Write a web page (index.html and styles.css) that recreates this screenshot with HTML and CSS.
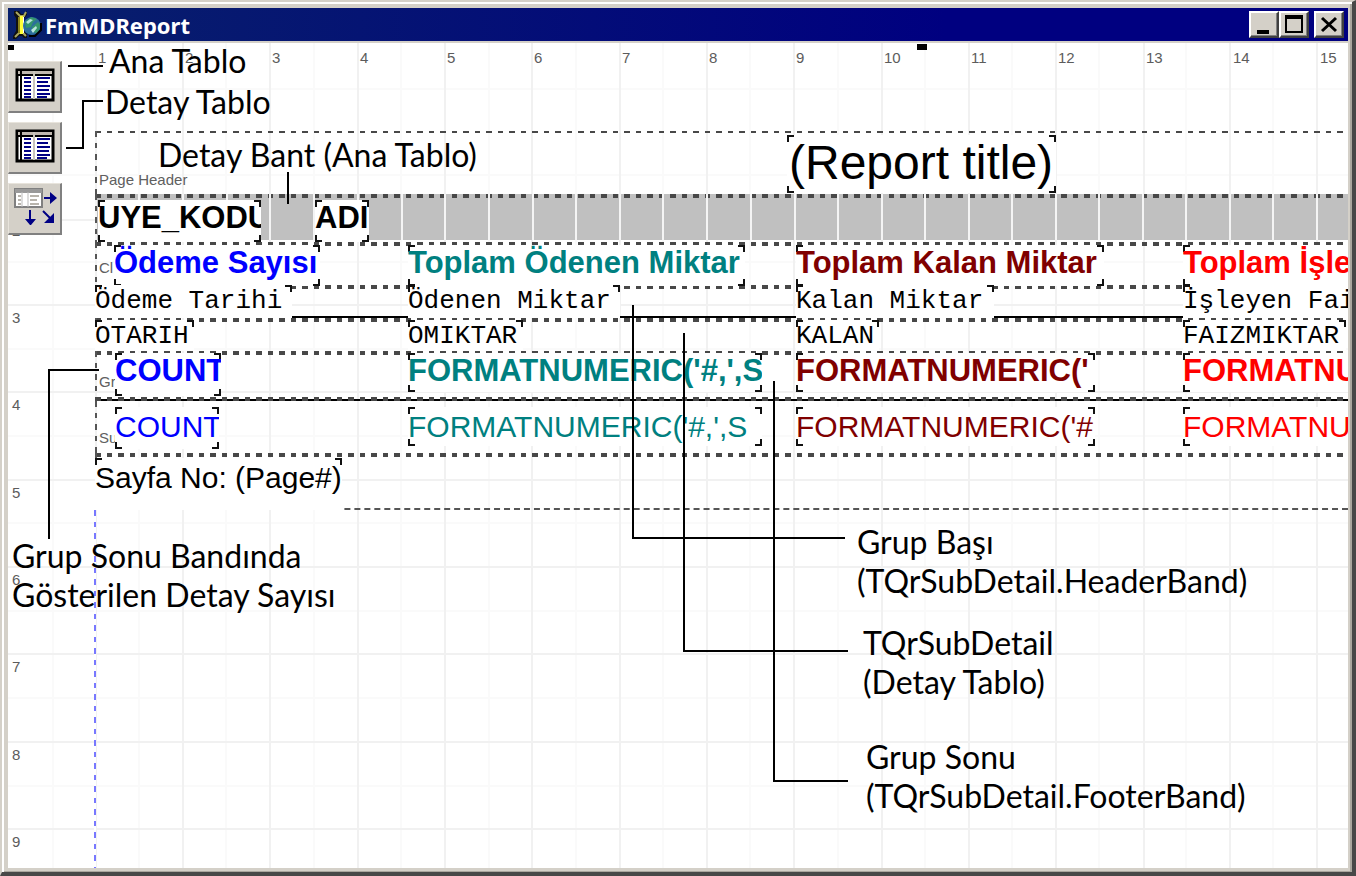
FILE: index.html
```html
<!DOCTYPE html>
<html lang="tr">
<head>
<meta charset="utf-8">
<title>FmMDReport</title>
<link rel="stylesheet" href="styles.css">
</head>
<body>
<main class="window">
  <header class="titlebar">
    <svg class="app-icon" viewBox="0 0 30 32" aria-hidden="true">
      <path d="M2 2h5l2 3h3l3-3v4l-3 3v13l3 3v4h-3l-2-2H7l-3 3H1v-3l3-5V9L2 6z" fill="#111"/>
      <path d="M4 3l4 4h4l2-4M3 28l4-4h4l3 3" fill="none" stroke="#aaa860" stroke-width="2"/>
      <path d="M6 8h2v16H6z" fill="#8c8418"/><path d="M8 7h3v18H8z" fill="#ffff38"/><path d="M11 8h1v16h-1z" fill="#fff"/>
      <circle cx="20" cy="17" r="9" fill="#2c6f9c"/>
      <path d="M13 13l6-5 6 2-4 3-2 5-5 1zM20 18l6-5 3 4-4 7-4-1z" fill="#35966c"/>
      <path d="M14 13l4-3 3 1-5 4zM19 21l5-4 1 2-4 5z" fill="#b9e6dc"/>
      <path d="M29 14v7l-6 6h-6" fill="none" stroke="#000" stroke-width="2"/>
    </svg>
    <h1 class="title">FmMDReport</h1>
    <div class="controls">
      <button class="ctl" type="button" aria-label="Minimize"><svg viewBox="0 0 26 23"><path d="M6 19h12" stroke="#000" stroke-width="4"/></svg></button>
      <button class="ctl" type="button" aria-label="Maximize"><svg viewBox="0 0 26 23"><path d="M5 3h16v16H5zM5 5h16" fill="none" stroke="#000" stroke-width="2"/></svg></button>
      <button class="ctl close" type="button" aria-label="Close"><svg viewBox="0 0 26 23"><path d="M6 5l14 13M20 5L6 18" stroke="#000" stroke-width="3"/></svg></button>
    </div>
  </header>

  <section class="canvas">
    <svg class="grid" aria-hidden="true">
      <path class="half" d="M45 0v2000M131 0v2000M218 0v2000M306 0v2000M393 0v2000M481 0v2000M568 0v2000M655 0v2000M742 0v2000M830 0v2000M917 0v2000M1004 0v2000M1091 0v2000M1178 0v2000M1265 0v2000M0 46h3000M0 132h3000M0 219h3000M0 306h3000M0 393h3000M0 480h3000M0 568h3000M0 655h3000M0 743h3000"/>
      <path class="full" d="M88 0v2000M175 0v2000M262 0v2000M350 0v2000M437 0v2000M524 0v2000M612 0v2000M699 0v2000M786 0v2000M874 0v2000M961 0v2000M1048 0v2000M1136 0v2000M1222 0v2000M1309 0v2000M0 177h3000M0 262h3000M0 349h3000M0 437h3000M0 524h3000M0 611h3000M0 699h3000M0 786h3000"/>
    </svg>
    <div class="ruler-x"><span>1</span><span>2</span><span>3</span><span>4</span><span>5</span><span>6</span><span>7</span><span>8</span><span>9</span><span>10</span><span>11</span><span>12</span><span>13</span><span>14</span><span>15</span></div>
    <div class="ruler-y"><span>2</span><span>3</span><span>4</span><span>5</span><span>6</span><span>7</span><span>8</span><span>9</span></div>
    <i class="handle corner"></i><i class="handle top"></i>
    <i class="margin-line"></i>

    <div class="toolbox">
      <button class="tool" type="button" aria-label="Ana Tablo"><svg viewBox="0 0 51 49"><use href="#table-icon"/></svg></button>
      <button class="tool" type="button" aria-label="Detay Tablo"><svg viewBox="0 0 51 49"><use href="#table-icon"/></svg></button>
      <button class="tool" type="button" aria-label="Master link">
        <svg viewBox="0 0 51 49">
          <path d="M6 5h27v18H6z" fill="#fff" stroke="#808080" stroke-width="2"/><path d="M6 7h27" stroke="#999" stroke-width="4"/><path d="M13 8v15M19 8v15" stroke="#bbb"/>
          <path d="M9 12h3M9 16h3M9 20h3M21 12h9M21 16h7M21 20h9" stroke="#b8b4ac" stroke-width="2"/>
          <path d="M35 14h8M21 26v11M34 27l9 9" stroke="#000084" stroke-width="2" fill="none"/>
          <path d="M41 8l7 6-7 6zM16 35h11l-5 6h-1zM45 29v10H35z" fill="#000084"/>
        </svg>
      </button>
    </div>
    <svg width="0" height="0" class="defs" aria-hidden="true">
      <symbol id="table-icon" viewBox="0 0 51 49">
        <path d="M8 8h36v30H8z" fill="#fff" stroke="#000" stroke-width="3"/>
        <path d="M8 9h35v3H8z" fill="#c0b8b0"/><path d="M7 13h37M12 8v30M8 8v30" stroke="#000" stroke-width="2"/>
        <path d="M25 9v28" stroke="#c8c4bc" stroke-width="2"/>
        <path d="M15 16h7M15 20h7M15 24h7M15 28h7M15 32h7M15 35h7M28 16h13M28 20h11M28 24h13M28 28h12M28 32h13M28 35h10" stroke="#000084" stroke-width="2"/>
      </symbol>
    </svg>

    <article class="report">
      <section class="band page-header thin">
        <span class="band-name">Page Header</span>
        <div class="field report-title">(Report title)</div>
      </section>
      <section class="band detail">
        <svg class="cells" aria-hidden="true"><path d="M88 0v46M131 0v46M175 0v46M219 0v46M262 0v46M306 0v46M350 0v46M394 0v46M437 0v46M481 0v46M525 0v46M568 0v46M612 0v46M655 0v46M699 0v46M743 0v46M787 0v46M830 0v46M874 0v46M917 0v46M961 0v46M1004 0v46M1048 0v46M1091 0v46M1135 0v46M1178 0v46M1222 0v46M1265 0v46M1309 0v46"/></svg>
        <div class="field bold code">UYE_KODU</div>
        <div class="field bold name">ADI</div>
      </section>
      <section class="band child">
        <span class="band-name">Cl</span>
        <div class="field bold blue c0">Ödeme Sayısı</div>
        <div class="field bold teal c1">Toplam Ödenen Miktar</div>
        <div class="field bold maroon c2">Toplam Kalan Miktar</div>
        <div class="field bold red c3">Toplam İşle</div>
      </section>
      <section class="band group-header">
        <div class="field mono c0">Ödeme Tarihi</div>
        <div class="field mono c1">Ödenen Miktar</div>
        <div class="field mono c2">Kalan Miktar</div>
        <div class="field mono c3">İşleyen Fai</div>
      </section>
      <section class="band sub-detail">
        <div class="field mono c0">OTARIH</div>
        <div class="field mono c1">OMIKTAR</div>
        <div class="field mono c2">KALAN</div>
        <div class="field mono c3">FAIZMIKTAR</div>
      </section>
      <section class="band group-footer">
        <span class="band-name">Gr</span>
        <div class="field bold blue c0">COUNT</div>
        <div class="field bold teal c1">FORMATNUMERIC('#,',S</div>
        <div class="field bold maroon c2">FORMATNUMERIC('</div>
        <div class="field bold red c3">FORMATNU</div>
      </section>
      <section class="band summary">
        <span class="band-name">Su</span>
        <div class="field blue c0">COUNT</div>
        <div class="field teal c1">FORMATNUMERIC('#,',S</div>
        <div class="field maroon c2">FORMATNUMERIC('#</div>
        <div class="field red c3">FORMATNU</div>
      </section>
      <section class="band page-footer">
        <div class="field page-no">Sayfa No: (Page#)</div>
      </section>
    </article>

    <svg class="callouts" aria-hidden="true">
      <path d="M60 23h35M58 105h17V58h20M280 129v32M91 327H41v169M625 262v233h212M676 290v318h164M766 338v400h74"/>
    </svg>
    <p class="note n1">Ana Tablo</p>
    <p class="note n2">Detay Tablo</p>
    <p class="note n3">Detay Bant (Ana Tablo)</p>
    <p class="note n4">Grup Sonu Bandında<br>Gösterilen Detay Sayısı</p>
    <p class="note n5">Grup Başı<br>(TQrSubDetail.HeaderBand)</p>
    <p class="note n6">TQrSubDetail<br>(Detay Tablo)</p>
    <p class="note n7">Grup Sonu<br>(TQrSubDetail.FooterBand)</p>
  </section>
</main>
</body>
</html>
```
FILE: styles.css
```css
* { box-sizing: border-box; }
body { margin: 0; font-family: "Liberation Sans", sans-serif; color: #000; }

.window {
  display: flex; flex-direction: column; min-height: 100vh;
  padding: 6px 4px 4px 6px; background: #d4d0c8;
  border: 2px solid #d4d0c8; border-right: 4px solid #484848; border-bottom: 4px solid #484848;
  box-shadow: inset 2px 2px 0 #fff, inset -2px -1px 0 #aaa69e;
}
.titlebar {
  display: flex; align-items: center; height: 33px; margin-bottom: 2px; padding: 0 4px 0 4px;
  background: linear-gradient(90deg, #08206b, #000080 70%);
}
.app-icon { width: 30px; height: 32px; }
.title { flex: 1; margin: 0 0 0 3px; font: bold 22px/32px "Noto Sans", sans-serif; color: #fff; }
.controls { display: flex; }
.ctl {
  width: 30px; height: 27px; padding: 0; background: #d4d0c8;
  border: 2px solid; border-color: #fff #404040 #404040 #fff; box-shadow: inset -1px -1px 0 #808080;
}
.ctl svg { display: block; width: 100%; height: 100%; }
.close { margin-left: 5px; }

.canvas { position: relative; flex: 1; overflow: hidden; background: #fff; }
.grid, .callouts { position: absolute; inset: 0; width: 100%; height: 100%; pointer-events: none; }
.grid path { fill: none; stroke-width: 2; }
.grid .half { stroke: #fafafa; }
.grid .full { stroke: #f1f1f1; }
.ruler-x, .ruler-y { position: absolute; display: grid; font-size: 15px; line-height: 18px; color: #5c5c5c; }
.ruler-x { left: 90px; top: 6px; grid-template-columns: repeat(5, 87px 87px 88px); }
.ruler-y { left: 4px; top: 179px; grid-template-rows: repeat(4, 87px 87px 88px); }
.handle { position: absolute; background: #000; }
.corner { left: 0; top: 2px; width: 6px; height: 5px; }
.top { left: 909px; top: 1px; width: 10px; height: 6px; }
.margin-line {
  position: absolute; left: 86px; top: 467px; bottom: 0; width: 2px;
  background: repeating-linear-gradient(#7878ff 0 6px, #fff 6px 12px, #7878ff 12px 17px, #fff 17px 23px);
}

.toolbox { position: absolute; left: 0; top: 18px; display: flex; flex-direction: column; gap: 9px; }
.tool {
  width: 54px; height: 52px; padding: 0; background: #d4d0c8;
  border: solid; border-width: 1px 2px 2px 1px; border-color: #e8e4dc #808080 #808080 #e8e4dc;
}
.tool svg { display: block; width: 100%; height: 100%; }
.defs { position: absolute; }

.report { padding: 88px 0 0 87px; }
.band { position: relative; }
.band::before {
  content: ""; position: absolute; inset: 0 0 auto 0; height: 4px;
  background: repeating-linear-gradient(90deg, #484848 0 6px, transparent 6px 12px, #484848 12px 17px, transparent 17px 23px);
}
.band::after {
  content: ""; position: absolute; inset: 0 auto 0 0; width: 2px;
  background: repeating-linear-gradient(#555 0 6px, transparent 6px 12px, #555 12px 17px, transparent 17px 23px);
}
.thin::before { height: 2px; }
.page-header { height: 63px; }
.detail { height: 48px; background: linear-gradient(#c0c0c0, #c0c0c0) 0 0 / 100% 46px no-repeat; }
.child { height: 43px; }
.group-header { height: 33px; border-bottom: 2px solid #000; }
.sub-detail { height: 33px; }
.group-footer { height: 48px; }
.summary { height: 54px; border-top: 2px solid #000; }
.summary::before { top: -4px; }
.page-footer { height: 57px; border-bottom: 2px dashed #555; }
.band-name { position: absolute; left: 4px; font-size: 15px; line-height: 18px; color: #606060; }
.page-header .band-name { top: 40px; }
.child .band-name { top: 17px; }
.group-footer .band-name { top: 22px; }
.summary .band-name { top: 28px; }
.cells { position: absolute; left: -87px; top: 0; width: calc(100% + 87px); height: 47px; }
.cells path { fill: none; stroke: #f4f4f4; stroke-width: 2; }

/* Corner ticks mark the bounds of each design-time field. */
.field {
  --tick: linear-gradient(#111, #111);
  position: absolute; z-index: 1; overflow: hidden; white-space: nowrap;
  font-size: 30px; line-height: 40px;
  background:
    var(--tick) 0 0 / 7px 2px no-repeat, var(--tick) 0 0 / 2px 7px no-repeat,
    var(--tick) 100% 0 / 7px 2px no-repeat, var(--tick) 100% 0 / 2px 7px no-repeat,
    var(--tick) 0 100% / 7px 2px no-repeat, var(--tick) 0 100% / 2px 7px no-repeat,
    var(--tick) 100% 100% / 7px 2px no-repeat, var(--tick) 100% 100% / 2px 7px no-repeat,
    #fff;
}
.bold { font-size: 31px; line-height: 36px; font-weight: bold; }
.mono, .page-no {
  background:
    var(--tick) 0 0 / 7px 2px no-repeat, var(--tick) 0 0 / 2px 7px no-repeat,
    var(--tick) 100% 0 / 7px 2px no-repeat, var(--tick) 100% 0 / 2px 7px no-repeat,
    #fff;
}
.mono { font-family: "Liberation Mono", monospace; font-size: 26px; line-height: 32px; }
.blue { color: #00f; }
.teal { color: #008080; }
.maroon { color: #800000; }
.red { color: #f00; }
.c1 { left: 313px; }
.c2 { left: 701px; }
.c3 { left: 1088px; right: -12px; }

.report-title { left: 692px; top: 4px; width: 269px; height: 58px; padding-left: 2px; font-size: 48px; line-height: 56px; }
.code { left: 3px; top: 6px; width: 163px; height: 42px; }
.name { left: 220px; top: 6px; width: 54px; height: 42px; }
.child .field { top: 3px; height: 41px; }
.child .c0 { left: 19px; width: 206px; }
.child .c1 { width: 337px; }
.child .c2 { width: 308px; }
.group-header .field { top: 0; height: 33px; }
.group-header .c0 { left: 0; width: 197px; }
.group-header .c1 { width: 212px; }
.group-header .c2 { width: 198px; }
.sub-detail .field { top: 2px; height: 31px; }
.sub-detail .c0 { left: 0; width: 99px; }
.sub-detail .c1 { width: 115px; }
.sub-detail .c2 { width: 83px; }
.sub-detail .c3 { right: auto; width: 163px; }
.group-footer .field { top: 2px; height: 39px; }
.group-footer .c0 { left: 20px; width: 106px; height: 43px; }
.group-footer .c1 { width: 354px; }
.group-footer .c2 { width: 299px; }
.summary .field { top: 6px; height: 39px; }
.summary .c0 { left: 20px; width: 104px; height: 42px; }
.summary .c1 { width: 354px; }
.summary .c2 { width: 299px; }
.page-no { left: 0; top: 5px; width: 247px; height: 52px; }

.callouts { z-index: 2; }
.callouts path { fill: none; stroke: #000; stroke-width: 2; }
.note { position: absolute; z-index: 3; margin: 0; white-space: nowrap; font: 32px/39px Lato, sans-serif; }
.n1 { left: 101px; top: -2px; }
.n2 { left: 97px; top: 39px; }
.n3 { left: 150px; top: 92px; }
.n4 { left: 4px; top: 493px; }
.n5 { left: 849px; top: 479px; }
.n6 { left: 855px; top: 580px; }
.n7 { left: 858px; top: 694px; }
```
